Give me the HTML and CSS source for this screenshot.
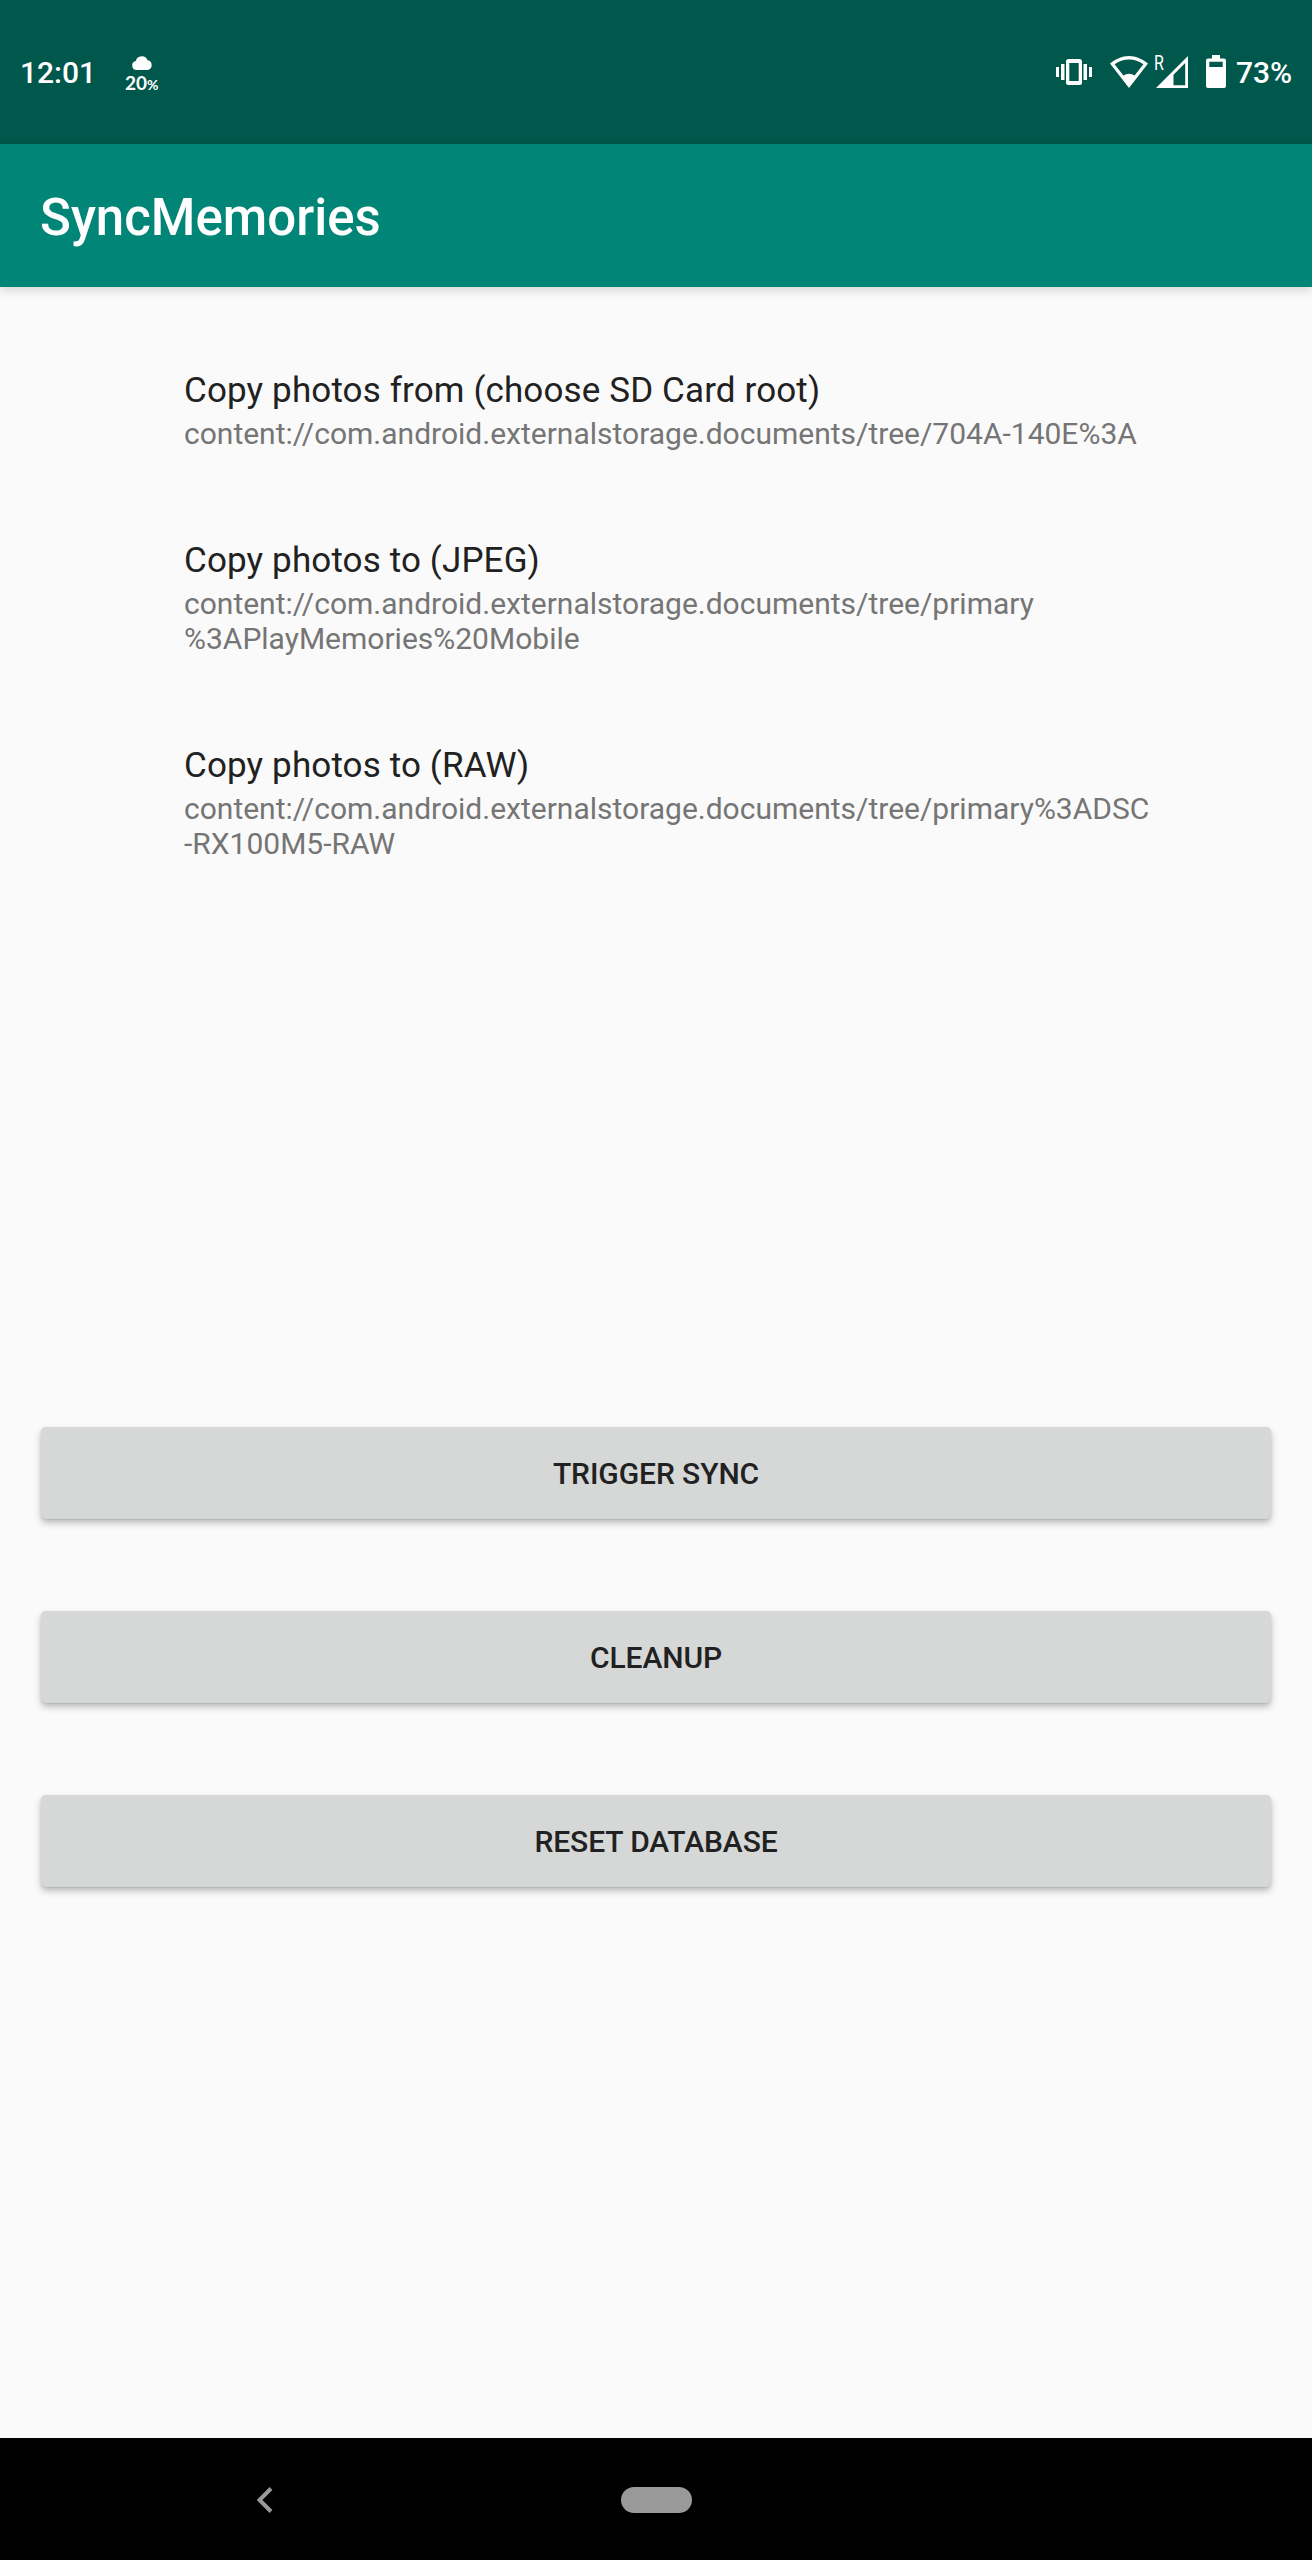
FILE: index.html
```html
<!DOCTYPE html>
<html lang="en">
<head>
<meta charset="utf-8">
<title>SyncMemories</title>
<link rel="stylesheet" href="styles.css">
</head>
<body>
<div class="screen">
  <header class="status">
    <span class="clock">12:01</span>
    <div class="weather">
      <svg class="cloud" width="20" height="14" viewBox="0 0 20 14"><path d="M4.6 14a4.5 4.5 0 0 1-.8-8.9A6.2 6.2 0 0 1 15.600 4.300 4.900 4.900 0 0 1 15.300 14z"/></svg>
      <span class="rain">20<small>%</small></span>
    </div>
    <div class="indicators">
      <svg class="vibrate" width="36" height="34" viewBox="0 0 36 34"><path fill-rule="evenodd" d="M12.500 4h11a2.500 2.500 0 0 1 2.500 2.500v21a2.500 2.500 0 0 1-2.500 2.500h-11a2.500 2.500 0 0 1-2.500-2.500v-21A2.500 2.500 0 0 1 12.500 4zm.8 4v18h9.400V8zM0 12h3v10H0zM5 9h3.500v16H5zM27.500 9H31v16h-3.500zM33 12h3v10h-3z"/></svg>
      <svg class="wifi" width="38" height="34" viewBox="0 0 38 34"><path fill-rule="evenodd" d="M0 8.600C5.300 4.300 11.900 1 19 1s13.700 3.300 19 7.600L19 33zm4.600.6 8.800 11.400a9 9 0 0 1 11.200 0l8.800-11.400C29.200 6.300 24.300 4.500 19 4.500S8.800 6.300 4.600 9.200z"/></svg>
      <div class="cell">
        <span class="roaming">R</span>
        <svg width="32" height="34" viewBox="0 0 32 34"><path fill-rule="evenodd" d="M32 1v32H0zm-2.800 7L17.500 19.700v10.500h11.700z"/></svg>
      </div>
      <svg class="battery" width="20" height="34" viewBox="0 0 20 34"><path fill-rule="evenodd" d="M6 0h8v3.500h4a2 2 0 0 1 2 2V31a2 2 0 0 1-2 2H2a2 2 0 0 1-2-2V5.500a2 2 0 0 1 2-2h4zM3.300 6.800V12h13.400V6.800z"/></svg>
      <span class="percent">73%</span>
    </div>
  </header>
  <div class="appbar"><h1>SyncMemories</h1></div>
  <main>
    <section class="prefs">
      <div class="pref"><h2>Copy photos from (choose SD Card root)</h2><p>content://com.android.externalstorage.documents/tree/704A-140E%3A</p></div>
      <div class="pref"><h2>Copy photos to (JPEG)</h2><p>content://com.android.externalstorage.documents/tree/primary<br>%3APlayMemories%20Mobile</p></div>
      <div class="pref"><h2>Copy photos to (RAW)</h2><p>content://com.android.externalstorage.documents/tree/primary%3ADSC<br>-RX100M5-RAW</p></div>
    </section>
    <section class="actions">
      <button>TRIGGER SYNC</button>
      <button>CLEANUP</button>
      <button>RESET DATABASE</button>
    </section>
  </main>
  <nav class="navbar">
    <svg class="back" width="16" height="26" viewBox="0 0 16 26"><path d="M14 1.500 2.500 13 14 24.500"/></svg>
    <span class="home"></span>
  </nav>
</div>
</body>
</html>
```
FILE: styles.css
```css
* { box-sizing: border-box; }
body, h1, h2, p { margin: 0; font-weight: 400; }
body { font-family: Roboto, sans-serif; background: #fafafa; }
svg { display: block; flex: none; }
.screen { width: 1312px; height: 2560px; display: flex; flex-direction: column; }

.status { height: 144px; flex: none; display: flex; align-items: flex-start; padding: 55px 20px 0; background: #00574b; color: #fff; fill: #fff; }
.clock, .percent { font-size: 30px; font-weight: 500; line-height: 35px; }
.clock { width: 106px; }
.weather { width: 40px; padding-top: 1px; }
.cloud { margin-left: 6px; }
.rain { display: block; margin-top: 3px; margin-left: -1px; font: 700 19px/19px Lato, sans-serif; white-space: nowrap; }
.rain small { font-size: 14px; }
.indicators { display: flex; margin-left: auto; }
.wifi { margin-left: 18px; }
.cell { position: relative; margin-left: 8px; }
.roaming { position: absolute; left: -2px; top: -2px; font-size: 20px; line-height: 20px; transform: scaleX(.8); transform-origin: left; }
.battery { margin-left: 18px; }
.percent { width: 56px; margin-left: 10px; }

.appbar { position: relative; height: 143px; flex: none; display: flex; align-items: center; padding: 4px 40px 0; background: #008577; color: #fff; box-shadow: 0 3px 10px rgba(0, 0, 0, .15); }
h1 { font-size: 51px; font-weight: 500; line-height: 60px; }

main { flex: 1; display: flex; flex-direction: column; }
.prefs { height: 1140px; padding: 39px 144px 0 184px; }
.pref { padding: 44px 0; white-space: nowrap; }
h2 { font-size: 35px; line-height: 41px; letter-spacing: .13px; color: #212121; }
.pref p { margin-top: 5px; margin-bottom: 1px; font-size: 30px; line-height: 35px; color: #757575; }
.actions { display: flex; flex-direction: column; gap: 92px; padding: 0 41px; }
button { height: 92px; padding: 0; border: 0; border-radius: 5px; background: #d6d7d7; color: #212121; font: 500 30px/35px Roboto, sans-serif; letter-spacing: -.08px; box-shadow: 0 4px 7px rgba(0, 0, 0, .25), 0 1px 2px rgba(0, 0, 0, .1); }

.navbar { height: 122px; flex: none; display: flex; align-items: center; padding: 1px 0 0 257px; background: #000; }
.back { fill: none; stroke: #999; stroke-width: 4; }
.home { width: 71px; height: 26px; margin-left: 348px; border-radius: 13px; background: #999; }
```
